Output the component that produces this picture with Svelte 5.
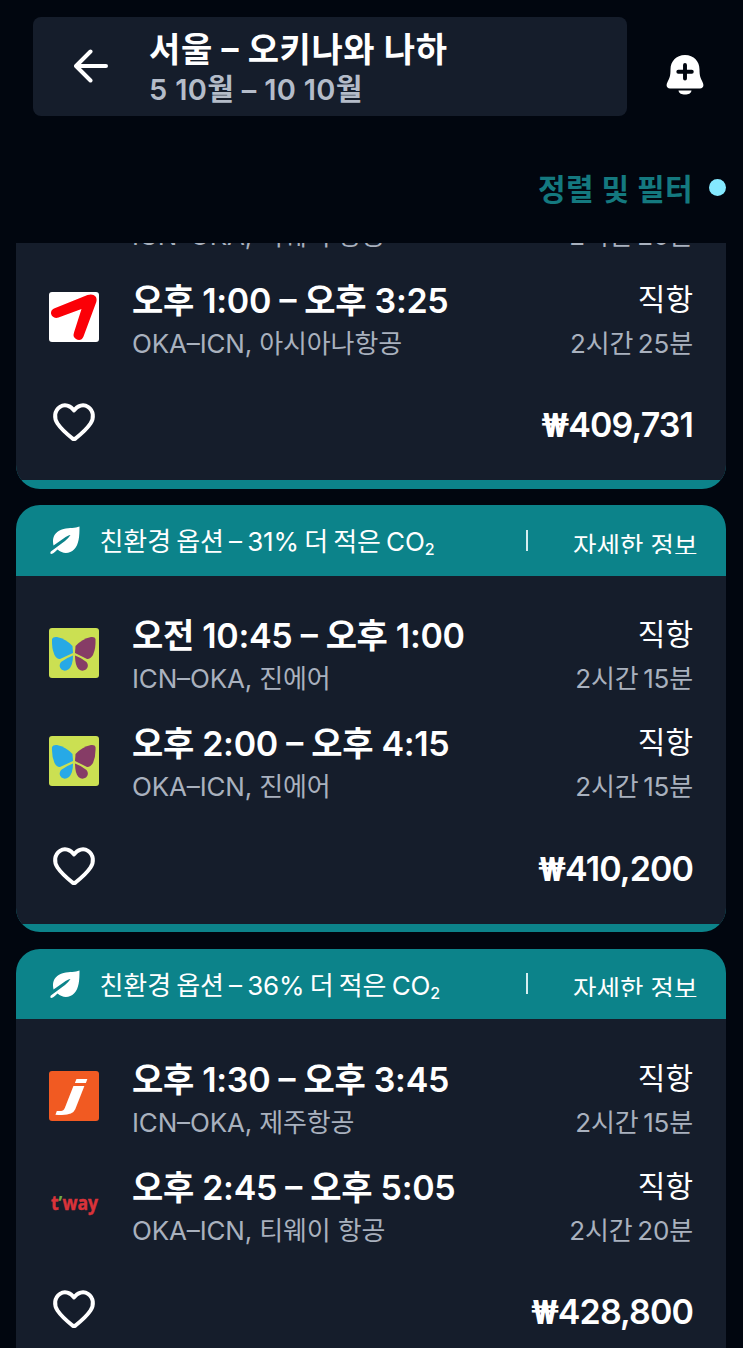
<script>
  let saved = $state([false, false, false]);

  const trips = [
    {
      co2: '28%',
      price: '409,731',
      legs: [
        { logo: 'tway', from: '오후 12:10', to: '오후 2:30', route: 'ICN–OKA, 티웨이 항공', duration: '2시간 20분' },
        { logo: 'asiana', from: '오후 1:00', to: '오후 3:25', route: 'OKA–ICN, 아시아나항공', duration: '2시간 25분' }
      ]
    },
    {
      co2: '31%',
      price: '410,200',
      legs: [
        { logo: 'jin', from: '오전 10:45', to: '오후 1:00', route: 'ICN–OKA, 진에어', duration: '2시간 15분' },
        { logo: 'jin', from: '오후 2:00', to: '오후 4:15', route: 'OKA–ICN, 진에어', duration: '2시간 15분' }
      ]
    },
    {
      co2: '36%',
      price: '428,800',
      legs: [
        { logo: 'jeju', from: '오후 1:30', to: '오후 3:45', route: 'ICN–OKA, 제주항공', duration: '2시간 15분' },
        { logo: 'tway', from: '오후 2:45', to: '오후 5:05', route: 'OKA–ICN, 티웨이 항공', duration: '2시간 20분' }
      ]
    }
  ];
</script>

{#snippet airline(name)}
  <svg class="logo" viewBox="0 0 50 50">
    {#if name === 'asiana'}
      <rect width="50" height="50" rx="3" fill="#fff" />
      <path d="M5 16.500L38.500 3C44 1 49 4 47.300 10L34.500 44.500C33 48.500 29.500 48.500 27 47Q23.500 45 25 40.500L32.500 17L9.500 25.500C5.500 27 2.500 24.500 2 21.500Q1.700 18 5 16.500Z" fill="#fb0007" />
    {:else if name === 'jin'}
      <rect width="50" height="50" rx="3" fill="#cbe052" />
      <path d="M3 11 Q4 8.500 8 9 Q17 11 23.500 18 L24 25 L11 31 Q8 31.500 5.500 27 Q2.500 20 3 11Z" fill="#27a9e6" />
      <path d="M46.500 11 Q46 8.500 42 9 Q33 11 26.500 18 L26 25 L38 31 Q41 31.500 44 27 Q47 20 46.500 11Z" fill="#863c66" />
      <path d="M24 27.500 Q17 30 12 34 Q9 38 12.500 41.500 Q16 44 20 41 Q24 37 24 27.500Z" fill="#27a9e6" />
      <path d="M26 27.500 Q33 30 37.500 34 Q40.500 38 37 41.500 Q33 44 29.500 41 Q26 37 26 27.500Z" fill="#863c66" />
    {:else if name === 'jeju'}
      <rect width="50" height="50" rx="3" fill="#f15a22" />
      <text class="jeju" x="15" y="35.500" textLength="22" lengthAdjust="spacingAndGlyphs">j</text>
    {:else}
      <text class="tway" x="2" y="31" textLength="47" lengthAdjust="spacingAndGlyphs">t<tspan fill="#6fae45">’</tspan>way</text>
    {/if}
  </svg>
{/snippet}

<div class="screen">
  <header class="top">
    <div class="search">
      <svg class="back" viewBox="0 0 34 34">
        <path d="M32 17H2.500M16.500 2.500L2 17l14.500 14.500" />
      </svg>
      <div class="summary">
        <h1>서울 – 오키나와 나하</h1>
        <p>5 10월 – 10 10월</p>
      </div>
    </div>
    <svg class="bell" viewBox="0 0 38 42">
      <path d="M19 1C10 1 4.500 7.500 4.500 15.500C4.500 22 3.500 24 1.500 28C-.5 32 1 34.500 4 34.500H34C37 34.500 38.500 32 36.500 28C34.500 24 33.500 22 33.500 15.500C33.500 7.500 28 1 19 1Z" fill="#fff" />
      <path d="M12.500 36.500H25.500C25 39.500 22.500 40.500 19 40.500S13 39.500 12.500 36.500Z" fill="#fff" />
      <path d="M19 11v13.500M12.300 17.700h13.500" stroke="#01060f" stroke-width="3.900" stroke-linecap="round" />
    </svg>
  </header>

  <div class="filter">
    <span>정렬 및 필터</span>
    <i class="dot"></i>
  </div>

  <main class="results">
    <div class="list">
      {#each trips as trip, i}
        <article class="card">
          <div class="eco">
            <svg class="leaf" viewBox="0 0 30 28">
              <path d="M29.500 .5C25 2.500 20 1.500 13.500 3C5.500 5 1.500 11 3.500 19.500L13.500 12.500Q18 9 20.500 9Q19 11.500 15 15L1.500 25Q-.5 26.500 1 28Q3 28 7.500 23.500C13 28.500 20 27.500 24 23.500C29 18.500 29.500 10 29.500 .5Z" fill="#fff" />
            </svg>
            <span class="co2">친환경 옵션 – {trip.co2} 더 적은 CO<sub>2</sub></span>
            <i class="divider"></i>
            <span class="more">자세한 정보</span>
          </div>
          <div class="body">
            {#each trip.legs as leg}
              <div class="leg">
                {@render airline(leg.logo)}
                <div class="info">
                  <div class="time">{leg.from} <span class="dash">–</span> {leg.to}</div>
                  <div class="sub">{leg.route}</div>
                </div>
                <div class="info right">
                  <div class="direct">직항</div>
                  <div class="sub">{leg.duration}</div>
                </div>
              </div>
            {/each}
            <div class="footer">
              <button class="save" aria-label="저장" onclick={() => (saved[i] = !saved[i])}>
                <svg viewBox="0 0 42 38">
                  <path class:filled={saved[i]} d="M21 7.500C17.500 2.300 11.500 .8 7 3.800C1.300 7.600 .8 15 4.500 20.500C8.500 26.500 14.500 31.500 19.500 35.500Q21 36.500 22.500 35.500C27.500 31.500 33.500 26.500 37.500 20.500C41.200 15 40.700 7.600 35 3.800C30.500 .8 24.500 2.300 21 7.500Z" />
                </svg>
              </button>
              <div class="price"><span class="won">₩</span>{trip.price}</div>
            </div>
          </div>
        </article>
      {/each}
    </div>
  </main>
</div>

<style>
  :global(body) {
    background: #01060f;
    overflow: hidden;
  }

  .screen {
    width: 743px;
    height: 1348px;
    display: flex;
    flex-direction: column;
    overflow: hidden;
    color: #fff;
    font-family: Inter, "Noto Sans CJK KR", sans-serif;
  }

  h1, p {
    margin: 0;
  }

  .top {
    display: flex;
    align-items: center;
    height: 99px;
    padding: 17px 39px 0 33px;
    justify-content: space-between;
  }

  .search {
    display: flex;
    align-items: center;
    width: 594px;
    height: 99px;
    box-sizing: border-box;
    padding-left: 41px;
    gap: 41px;
    border-radius: 8px;
    background: #151d2b;
  }

  .back {
    width: 34px;
    height: 34px;
    margin-top: -1px;
    fill: none;
    stroke: #fff;
    stroke-width: 4;
    stroke-linecap: round;
    stroke-linejoin: round;
  }

  .summary {
    padding-top: 6px;
  }

  h1 {
    font-size: 34px;
    line-height: 40px;
    font-weight: 700;
    letter-spacing: .6px;
    font-feature-settings: "case";
    white-space: nowrap;
  }

  p {
    font-size: 29px;
    line-height: 40px;
    font-weight: 600;
    letter-spacing: .3px;
    color: #b4bcc9;
    white-space: nowrap;
  }

  .bell {
    width: 38px;
    height: 42px;
    margin-top: 16px;
  }

  .filter {
    display: flex;
    align-items: center;
    justify-content: flex-end;
    gap: 16px;
    height: 127px;
    padding: 15px 17px 0 0;
    box-sizing: border-box;
    color: #14797f;
    font-size: 30px;
    font-weight: 700;
    letter-spacing: .4px;
  }

  .dot {
    width: 17px;
    height: 17px;
    border-radius: 50%;
    background: #84e9ff;
  }

  .results {
    flex: 1;
    min-height: 0;
    overflow: hidden;
  }

  /* scrolled part way into the first card */
  .list {
    display: flex;
    flex-direction: column;
    gap: 16.500px;
    margin: -181.500px 16px 0;
  }

  .card {
    flex: none;
    width: 710px;
    height: 427px;
    box-sizing: border-box;
    border-radius: 24px;
    overflow: hidden;
    background: #0c838a;
  }

  .eco {
    display: flex;
    align-items: center;
    height: 70.500px;
    padding: 0 28.500px 0 34px;
    font-size: 26px;
    font-weight: 400;
  }

  .leaf {
    width: 30px;
    height: 28px;
    margin-right: 19.500px;
  }

  .co2 {
    flex: 1;
    margin-top: -1px;
    letter-spacing: -.100px;
    word-spacing: -2px;
    font-feature-settings: "case";
    white-space: nowrap;
  }

  sub {
    font-size: 16px;
    line-height: 0;
    vertical-align: -4px;
    font-weight: 500;
  }

  .divider {
    width: 2px;
    height: 21px;
    margin-right: 45px;
    background: #d5eef0;
  }

  .more {
    height: 27px;
    line-height: 38px;
    overflow: hidden;
    font-size: 25.500px;
    font-weight: 400;
    white-space: nowrap;
  }

  .body {
    height: 348px;
    padding: 23px 33px 0;
    box-sizing: border-box;
    background: #151d2b;
  }

  .leg {
    display: flex;
    align-items: center;
    height: 108px;
  }

  .logo {
    width: 50px;
    height: 50px;
    margin-right: 33px;
  }

  .info {
    flex: 1;
    padding-top: 9px;
    white-space: nowrap;
  }

  .right {
    flex: none;
    text-align: right;
  }

  .time, .direct {
    height: 43px;
    line-height: 43px;
    font-size: 34px;
    font-weight: 600;
    letter-spacing: -.300px;
  }

  .dash {
    font-feature-settings: "case";
  }

  .direct {
    line-height: 41px;
    font-size: 30px;
    font-weight: 400;
    letter-spacing: 0;
  }

  .sub {
    height: 43px;
    line-height: 43px;
    font-size: 26px;
    font-weight: 400;
    letter-spacing: -.150px;
    font-feature-settings: "case";
    color: #a9b1be;
  }

  .right .sub {
    word-spacing: -2.500px;
  }

  .footer {
    display: flex;
    align-items: center;
    justify-content: space-between;
    height: 102px;
    padding-left: 4px;
  }

  .save {
    padding: 0;
    border: 0;
    background: none;
    width: 42px;
    height: 38px;
  }

  .save svg {
    display: block;
    fill: none;
    stroke: #fff;
    stroke-width: 4;
    stroke-linejoin: round;
    overflow: visible;
  }

  .filled {
    fill: #fff;
  }

  .price {
    padding-top: 5px;
    font-size: 34px;
    font-weight: 600;
    letter-spacing: -.900px;
  }

  .won {
    font-family: Roboto, sans-serif;
    font-weight: 700;
  }

  .tway {
    font: 700 20px "Open Sans", sans-serif;
    fill: #d9333a;
    stroke: #d9333a;
    stroke-width: .5;
  }

  .tway tspan {
    stroke: none;
  }

  .jeju {
    font: italic 700 38px "Liberation Sans", sans-serif;
    fill: #fff;
  }
</style>
